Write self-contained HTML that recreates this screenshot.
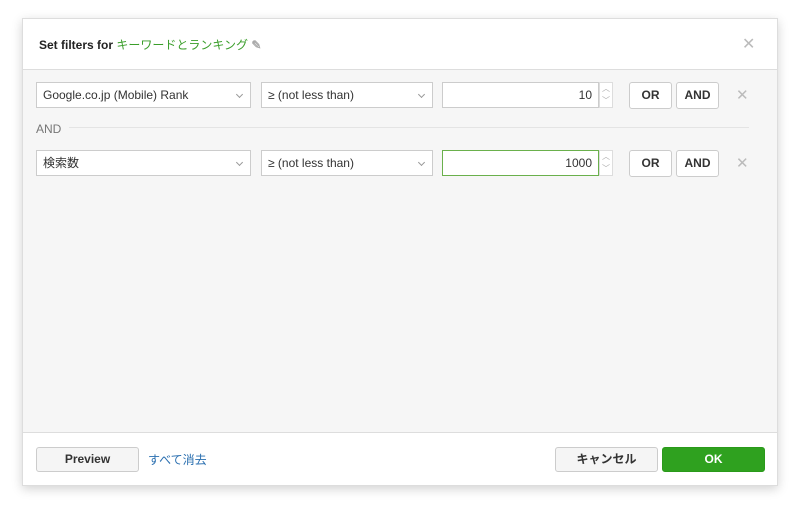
<!DOCTYPE html><html><head><style>
*{box-sizing:border-box;margin:0;padding:0}
body{width:800px;height:511px;background:#fff;font-family:"Liberation Sans","Noto Sans CJK JP",sans-serif;position:relative;overflow:hidden}
.dlg{position:absolute;left:22px;top:18px;width:756px;height:468px;background:#f6f6f6;border:1px solid #ddd;box-shadow:0 3px 10px rgba(0,0,0,.18)}
.hd{position:absolute;left:0;top:0;width:100%;height:51px;background:#fff;border-bottom:1px solid #ddd}
.ft{position:absolute;left:0;bottom:0;width:100%;height:53px;background:#fff;border-top:1px solid #ddd}
.a{position:absolute}
.sel{position:absolute;height:26px;background:#fff;border:1px solid #ccc;font-size:12px;color:#333;line-height:24px;padding-left:6px}
.sel:after{content:"";position:absolute;right:8px;top:9px;width:4px;height:4px;border-right:1px solid #999;border-bottom:1px solid #999;transform:rotate(45deg)}
.inp{position:absolute;height:26px;background:#fff;border:1px solid #ccc;font-size:12px;color:#333;line-height:24px;text-align:right;padding-right:6px}
.sp{position:absolute;width:14px;height:26px;border:1px solid #ddd;background:#fff;font-size:8px;color:#aaa;text-align:center;line-height:12px}
.btn{position:absolute;height:27px;background:#fff;border:1px solid #ccc;border-radius:3px;font-size:12px;font-weight:bold;color:#333;text-align:center;line-height:25px}
.x{position:absolute;color:#bbb;font-size:15px}
</style></head><body>
<div class="dlg">
<div class="hd">
<div class="a" style="left:16px;top:17px;font-size:12px;font-weight:bold;color:#222">Set filters for<span style="color:#3a9e2a;font-weight:normal"> キーワードとランキング</span> <span style="color:#aaa">✎</span></div>
<div class="x" style="left:719px;top:15px;font-size:16px">✕</div>
</div>
<div class="sel" style="left:13px;top:63px;width:215px">Google.co.jp (Mobile) Rank</div>
<div class="sel" style="left:238px;top:63px;width:172px">≥ (not less than)</div>
<div class="inp" style="left:419px;top:63px;width:157px">10</div>
<div class="sp" style="left:576px;top:63px">︿<br>﹀</div>
<div class="btn" style="left:606px;top:63px;width:43px">OR</div>
<div class="btn" style="left:653px;top:63px;width:43px">AND</div>
<div class="x" style="left:713px;top:67px">✕</div>
<div class="a" style="left:13px;top:103px;font-size:12px;color:#777">AND</div>
<div class="a" style="left:46px;top:108px;width:680px;height:1px;background:#e4e4e4"></div>
<div class="sel" style="left:13px;top:131px;width:215px">検索数</div>
<div class="sel" style="left:238px;top:131px;width:172px">≥ (not less than)</div>
<div class="inp" style="left:419px;top:131px;width:157px;border-color:#6ab04c">1000</div>
<div class="sp" style="left:576px;top:131px">︿<br>﹀</div>
<div class="btn" style="left:606px;top:131px;width:43px">OR</div>
<div class="btn" style="left:653px;top:131px;width:43px">AND</div>
<div class="x" style="left:713px;top:135px">✕</div>
<div class="ft">
<div class="btn" style="left:13px;top:14px;width:103px;height:25px;line-height:23px;background:#f5f5f5">Preview</div>
<div class="a" style="left:125px;top:18px;font-size:12px;color:#2a6fb0">すべて消去</div>
<div class="btn" style="left:532px;top:14px;width:103px;height:25px;line-height:23px;background:#f5f5f5">キャンセル</div>
<div class="btn" style="left:639px;top:14px;width:103px;height:25px;line-height:23px;background:#2fa11f;border-color:#2a9a1a;color:#fff">OK</div>
</div>
</div>
</body></html>
